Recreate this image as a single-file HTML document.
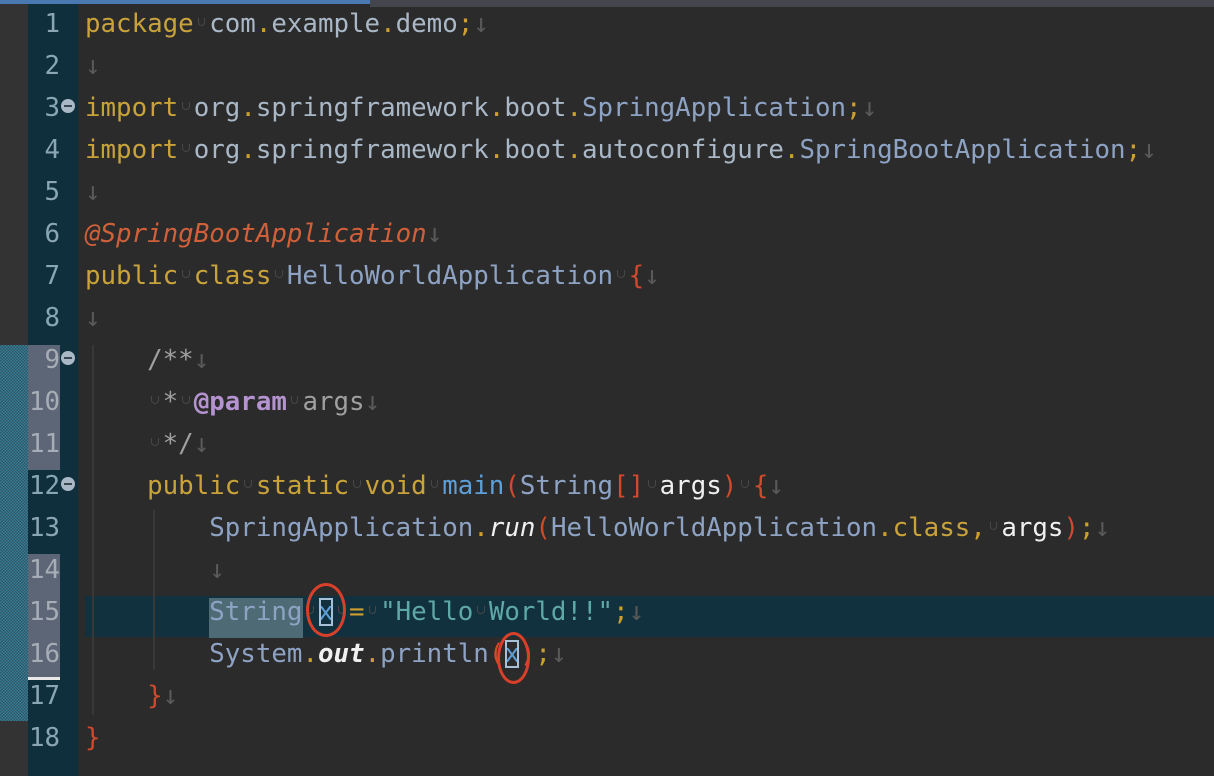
<!DOCTYPE html>
<html><head><meta charset="utf-8"><style>
body{margin:0;width:1214px;height:776px;overflow:hidden;background:#2b2b2b;position:relative;font-family:"DejaVu Sans Mono","Liberation Mono",monospace;font-size:25.8px}
.a{position:absolute}
.ln{position:absolute;left:28px;width:32px;text-align:right;color:#8aa6b4;height:42px;line-height:42px}
.ln.d{color:#a7adb6}
.c{position:absolute;left:85px;height:42px;line-height:42px;white-space:pre;color:#a9b7c6}
.k{color:#c9a23a}.p{color:#cc9f2f}.t{color:#8ea3c4}.an{color:#d0603a;font-style:italic}
.g{color:#5a5a5a}.r{color:#d04a2e}.m{color:#5d9fd8}.s{color:#5fa8a8}.w{color:#f0f0f0}
.cm{color:#a0a0a0}.tg{color:#b592d0;font-weight:bold}
.u{display:inline-block;width:0.602em;color:#4a4a4a;font-size:1em;position:relative}
.u:after{content:"";position:absolute;left:4px;right:4px;bottom:6px;height:7px;border:1.5px solid #474747;border-top:none;border-radius:0 0 4px 4px}
.fold{position:absolute;left:61px;width:14px;height:14px;border-radius:50%;background:#a9b8c4}
.fold:after{content:"";position:absolute;left:3px;right:3px;top:6px;height:2px;background:#3a4650}
.guide{position:absolute;width:0;border-left:2px solid #383838}
</style></head><body>
<div class="a" style="left:0;top:0;width:370px;height:4px;background:#4a78b0"></div>
<div class="a" style="left:370px;top:0;width:844px;height:7px;background:#45454d"></div>
<div class="a" style="left:0;top:4px;width:28px;height:772px;background:#333"></div>
<div class="a" style="left:0;top:345px;width:28px;height:376px;background:repeating-conic-gradient(#3a7d94 0 25%,#2c5566 0 50%) 0 0/3px 3px"></div>
<div class="a" style="left:28px;top:4px;width:50px;height:772px;background:#0f2f3d"></div>
<div class="a" style="left:28px;top:345px;width:32px;height:125px;background:#5c6676"></div>
<div class="a" style="left:28px;top:554px;width:32px;height:124px;background:#5c6676"></div>
<div class="a" style="left:28px;top:677px;width:32px;height:3px;background:#e8e8e8"></div>
<div class="a" style="left:85px;top:596px;width:1129px;height:41px;background:#12313e"></div>
<div class="a" style="left:209px;top:598px;width:94px;height:40px;background:#4e6a74"></div>
<div class="guide" style="left:92px;top:345px;height:370px"></div>
<div class="guide" style="left:153px;top:510px;height:160px"></div>

<div class="ln" style="top:3px">1</div><div class="ln" style="top:45px">2</div><div class="ln" style="top:87px">3</div><div class="ln" style="top:129px">4</div><div class="ln" style="top:171px">5</div><div class="ln" style="top:213px">6</div><div class="ln" style="top:255px">7</div><div class="ln" style="top:297px">8</div><div class="ln d" style="top:339px">9</div><div class="ln d" style="top:381px">10</div><div class="ln d" style="top:423px">11</div><div class="ln" style="top:465px">12</div><div class="ln" style="top:507px">13</div><div class="ln d" style="top:549px">14</div><div class="ln d" style="top:591px">15</div><div class="ln d" style="top:633px">16</div><div class="ln" style="top:675px">17</div><div class="ln" style="top:717px">18</div>
<div class="fold" style="top:99px"></div><div class="fold" style="top:351px"></div><div class="fold" style="top:477px"></div>

<div class="c" style="top:3px"><span class="k">package</span><span class="u"></span>com<span class="p">.</span>example<span class="p">.</span>demo<span class="p">;</span><span class="g">↓</span></div>
<div class="c" style="top:45px"><span class="g">↓</span></div>
<div class="c" style="top:87px"><span class="k">import</span><span class="u"></span>org<span class="p">.</span>springframework<span class="p">.</span>boot<span class="p">.</span><span class="t">SpringApplication</span><span class="p">;</span><span class="g">↓</span></div>
<div class="c" style="top:129px"><span class="k">import</span><span class="u"></span>org<span class="p">.</span>springframework<span class="p">.</span>boot<span class="p">.</span>autoconfigure<span class="p">.</span><span class="t">SpringBootApplication</span><span class="p">;</span><span class="g">↓</span></div>
<div class="c" style="top:171px"><span class="g">↓</span></div>
<div class="c" style="top:213px"><span class="an">@SpringBootApplication</span><span class="g">↓</span></div>
<div class="c" style="top:255px"><span class="k">public</span><span class="u"></span><span class="k">class</span><span class="u"></span><span class="t">HelloWorldApplication</span><span class="u"></span><span class="r">{</span><span class="g">↓</span></div>
<div class="c" style="top:297px"><span class="g">↓</span></div>
<div class="c" style="top:339px">    <span class="cm">/**</span><span class="g">↓</span></div>
<div class="c" style="top:381px">    <span class="u"></span><span class="cm">*</span><span class="u"></span><span class="tg">@param</span><span class="u"></span><span class="cm">args</span><span class="g">↓</span></div>
<div class="c" style="top:423px">    <span class="u"></span><span class="cm">*/</span><span class="g">↓</span></div>
<div class="c" style="top:465px">    <span class="k">public</span><span class="u"></span><span class="k">static</span><span class="u"></span><span class="k">void</span><span class="u"></span><span class="m">main</span><span class="r">(</span><span class="t">String</span><span class="r">[]</span><span class="u"></span><span class="w">args</span><span class="r">)</span><span class="u"></span><span class="r">{</span><span class="g">↓</span></div>
<div class="c" style="top:507px">        <span class="t">SpringApplication</span><span class="p">.</span><span class="w" style="font-style:italic">run</span><span class="r">(</span><span class="t">HelloWorldApplication</span><span class="p">.</span><span class="k">class</span><span class="p">,</span><span class="u"></span><span class="w">args</span><span class="r">)</span><span class="p">;</span><span class="g">↓</span></div>
<div class="c" style="top:549px">        <span class="g">↓</span></div>
<div class="c" style="top:591px">        <span class="t">String</span><span class="u"></span><span class="m" style="outline:2px solid #a8c0d8;outline-offset:-3px">x</span><span class="u"></span><span class="p">=</span><span class="u"></span><span class="s">"Hello<span class="u"></span>World!!"</span><span class="p">;</span><span class="g">↓</span></div>
<div class="c" style="top:633px">        <span class="t">System</span><span class="p">.</span><span class="w" style="font-style:italic;font-weight:bold">out</span><span class="p">.</span><span class="t">println</span><span class="r">(</span><span class="m" style="outline:2px solid #a8c0d8;outline-offset:-3px">x</span><span class="r">)</span><span class="p">;</span><span class="g">↓</span></div>
<div class="c" style="top:675px">    <span class="r">}</span><span class="g">↓</span></div>
<div class="c" style="top:717px"><span class="r">}</span></div>
<div class="a" style="left:306px;top:583px;width:40px;height:54px;border:3px solid #d8402a;border-radius:50%;box-sizing:border-box"></div>
<div class="a" style="left:497px;top:632px;width:33px;height:52px;border:3px solid #d8402a;border-radius:50%;box-sizing:border-box"></div>
</body></html>
